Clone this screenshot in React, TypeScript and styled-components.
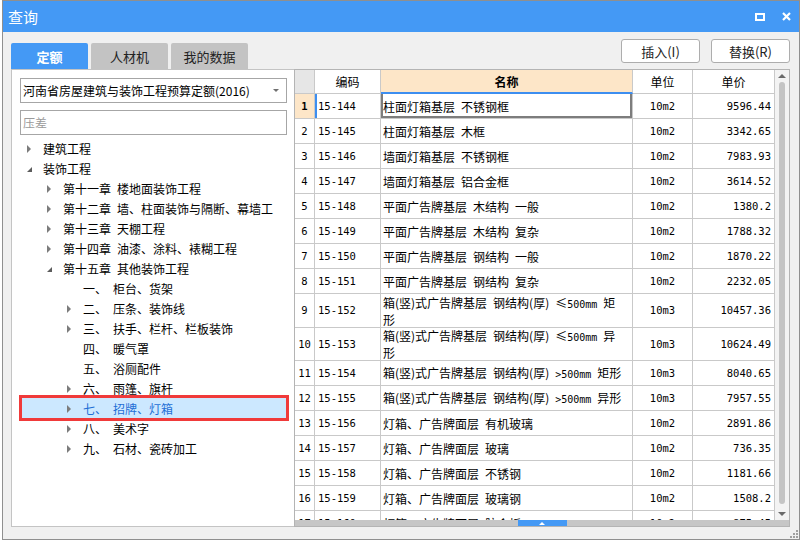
import styled, { createGlobalStyle } from "styled-components";

const GlobalStyle = createGlobalStyle`
  html, body {
    margin: 0;
    padding: 0;
    background: #ffffff;
  }
  body {
    font-family: "Noto Sans CJK SC", "Noto Sans", sans-serif;
    font-size: 12px;
    color: #000;
  }
  * {
    box-sizing: border-box;
  }
`;

const BLUE = "#4499f5";
const COLS = "20px 66px 252px 60px 82px";

type TreeItem = {
  level: number;
  label: string;
  arrow: "open" | "closed" | "none";
  selected?: boolean;
};

const tree: TreeItem[] = [
  { level: 0, label: "建筑工程", arrow: "closed" },
  { level: 0, label: "装饰工程", arrow: "open" },
  { level: 1, label: "第十一章 楼地面装饰工程", arrow: "closed" },
  { level: 1, label: "第十二章 墙、柱面装饰与隔断、幕墙工", arrow: "closed" },
  { level: 1, label: "第十三章 天棚工程", arrow: "closed" },
  { level: 1, label: "第十四章 油漆、涂料、裱糊工程", arrow: "closed" },
  { level: 1, label: "第十五章 其他装饰工程", arrow: "open" },
  { level: 2, label: "一、 柜台、货架", arrow: "none" },
  { level: 2, label: "二、 压条、装饰线", arrow: "closed" },
  { level: 2, label: "三、 扶手、栏杆、栏板装饰", arrow: "closed" },
  { level: 2, label: "四、 暖气罩", arrow: "none" },
  { level: 2, label: "五、 浴厕配件", arrow: "none" },
  { level: 2, label: "六、 雨篷、旗杆", arrow: "closed" },
  { level: 2, label: "七、 招牌、灯箱", arrow: "closed", selected: true },
  { level: 2, label: "八、 美术字", arrow: "closed" },
  { level: 2, label: "九、 石材、瓷砖加工", arrow: "closed" },
];

type Quota = { code: string; name: string; unit: string; price: string; h?: number };

const rows: Quota[] = [
  { code: "15-144", name: "柱面灯箱基层 不锈钢框", unit: "10m2", price: "9596.44" },
  { code: "15-145", name: "柱面灯箱基层 木框", unit: "10m2", price: "3342.65" },
  { code: "15-146", name: "墙面灯箱基层 不锈钢框", unit: "10m2", price: "7983.93" },
  { code: "15-147", name: "墙面灯箱基层 铝合金框", unit: "10m2", price: "3614.52" },
  { code: "15-148", name: "平面广告牌基层 木结构 一般", unit: "10m2", price: "1380.2" },
  { code: "15-149", name: "平面广告牌基层 木结构 复杂", unit: "10m2", price: "1788.32" },
  { code: "15-150", name: "平面广告牌基层 钢结构 一般", unit: "10m2", price: "1870.22" },
  { code: "15-151", name: "平面广告牌基层 钢结构 复杂", unit: "10m2", price: "2232.05" },
  { code: "15-152", name: "箱(竖)式广告牌基层 钢结构(厚) ≤500mm 矩\n形", unit: "10m3", price: "10457.36", h: 34 },
  { code: "15-153", name: "箱(竖)式广告牌基层 钢结构(厚) ≤500mm 异\n形", unit: "10m3", price: "10624.49", h: 33 },
  { code: "15-154", name: "箱(竖)式广告牌基层 钢结构(厚) >500mm 矩形", unit: "10m3", price: "8040.65" },
  { code: "15-155", name: "箱(竖)式广告牌基层 钢结构(厚) >500mm 异形", unit: "10m3", price: "7957.55" },
  { code: "15-156", name: "灯箱、广告牌面层 有机玻璃", unit: "10m2", price: "2891.86" },
  { code: "15-157", name: "灯箱、广告牌面层 玻璃", unit: "10m2", price: "736.35" },
  { code: "15-158", name: "灯箱、广告牌面层 不锈钢", unit: "10m2", price: "1181.66" },
  { code: "15-159", name: "灯箱、广告牌面层 玻璃钢", unit: "10m2", price: "1508.2" },
  { code: "15-160", name: "灯箱、广告牌面层 胶合板", unit: "10m2", price: "875.45" },
];

// half-width gaps like the old SimSun layout
const gap = (s: string) => s.replace(/ /g, "\u2002");

const Window = styled.div`
  margin-left: 2px;
  width: 798px;
  height: 540px;
  border: 1px solid #8f8f8f;
  background: #f0f0f0;
  display: flex;
  flex-direction: column;
`;

const TitleBar = styled.div`
  height: 31px;
  background: ${BLUE};
  color: #fff;
  display: flex;
  align-items: center;
  padding: 0 8px 0 5px;
  font-size: 15px;
`;

const Title = styled.span`
  flex: 1;
`;

const WinButtons = styled.div`
  display: flex;
  align-items: center;
  gap: 17px;
`;

const Toolbar = styled.div`
  height: 37px;
  display: flex;
  justify-content: space-between;
  padding: 0 9px 0 8px;
`;

const Tabs = styled.div`
  align-self: flex-end;
  display: flex;
  gap: 3px;
`;

const Tab = styled.div<{ $active?: boolean }>`
  width: 77px;
  height: 26px;
  display: flex;
  align-items: center;
  justify-content: center;
  font-size: 13px;
  font-weight: ${(p) => (p.$active ? 700 : 400)};
  color: ${(p) => (p.$active ? "#fff" : "#222")};
  background: ${(p) => (p.$active ? BLUE : "#c3c3c3")};
  border-radius: 2px 2px 0 0;
`;

const Actions = styled.div`
  display: flex;
  gap: 11px;
  margin-top: 7px;
`;

const Button = styled.button`
  width: 79px;
  height: 24px;
  background: #fff;
  border: 1px solid #adadad;
  border-radius: 3px;
  font-family: inherit;
  font-size: 13px;
  color: #222;
  padding: 0;
`;

const Content = styled.div`
  height: 458px;
  display: flex;
  padding: 0 9px 0 8px;
`;

const LeftPanel = styled.div`
  width: 283px;
  background: #fff;
  border: 1px solid #c4c4c4;
  border-right: none;
  padding: 8px 7px 0 8px;
`;

const Select = styled.div`
  height: 25px;
  border: 1px solid #a6a6a6;
  display: flex;
  align-items: center;
  justify-content: space-between;
  padding: 0 7px 0 2px;
  font-size: 12px;
`;

const Caret = styled.span`
  width: 0;
  height: 0;
  border-left: 3px solid transparent;
  border-right: 3px solid transparent;
  border-top: 3px solid #707070;
`;

const Search = styled.input`
  margin-top: 7px;
  width: 100%;
  height: 25px;
  border: 1px solid #a6a6a6;
  padding: 0 2px;
  font-family: inherit;
  font-size: 12px;
  outline: none;
  &::placeholder {
    color: #9a9a9a;
  }
`;

const Tree = styled.div`
  margin: 3px 1px 0 2px;
`;

const TreeRow = styled.div<{ $level: number; $selected?: boolean }>`
  height: 20px;
  display: flex;
  align-items: center;
  padding-left: ${(p) => 5 + p.$level * 20}px;
  white-space: pre;
  color: ${(p) => (p.$selected ? "#1f6fd6" : "#000")};
  background: ${(p) => (p.$selected ? "#cce8ff" : "transparent")};
  outline: ${(p) => (p.$selected ? "3px solid #f03a3a" : "none")};
`;

const ArrowBox = styled.span`
  width: 16px;
  height: 20px;
  flex: none;
  display: flex;
  align-items: center;
`;

const Closed = styled.span`
  width: 0;
  height: 0;
  border-left: 4px solid #7c7c7c;
  border-top: 4px solid transparent;
  border-bottom: 4px solid transparent;
  margin-top: 1px;
`;

const Opened = styled.span`
  width: 0;
  height: 0;
  border-left: 5px solid transparent;
  border-bottom: 5px solid #5c5c5c;
  margin-top: 3px;
`;

const Grid = styled.div`
  flex: 1;
  background: #fff;
  border: 1px solid #b4b4b4;
  display: flex;
  flex-direction: column;
`;

const GridMain = styled.div`
  flex: 1;
  min-height: 0;
  display: flex;
`;

const Table = styled.div`
  flex: 1;
  overflow: hidden;
`;

const Row = styled.div<{ $h: number }>`
  display: grid;
  grid-template-columns: ${COLS};
  height: ${(p) => p.$h}px;
`;

const Cell = styled.div`
  display: flex;
  align-items: center;
  border-right: 1px solid #c9c9c9;
  border-bottom: 1px solid #c9c9c9;
  overflow: hidden;
  white-space: pre;
  line-height: 15px;
`;

const HeadCell = styled(Cell)<{ $bg?: string; $bold?: boolean; $mark?: boolean }>`
  justify-content: center;
  font-size: 12px;
  font-weight: ${(p) => (p.$bold ? 700 : 400)};
  background: ${(p) => p.$bg ?? "#fff"};
  border-bottom: ${(p) => (p.$mark ? `2px solid #3d8ef0` : "1px solid #c9c9c9")};
`;

const Mono = styled(Cell)`
  font-family: "DejaVu Sans Mono", "Liberation Mono", monospace;
  font-size: 10.5px;
`;

const NumCell = styled(Mono)<{ $current?: boolean }>`
  justify-content: center;
  font-weight: ${(p) => (p.$current ? 700 : 400)};
  background: ${(p) => (p.$current ? "#fde6c8" : "#fff")};
`;

const CodeCell = styled(Mono)<{ $current?: boolean }>`
  padding-left: 3px;
  box-shadow: ${(p) => (p.$current ? "inset 2px 0 0 #3d8ef0" : "none")};
`;

const NameCell = styled(Cell)<{ $current?: boolean }>`
  padding-left: 2px;
  font-size: 12px;
  box-shadow: ${(p) =>
    p.$current ? "inset 2px 0 0 #7d7d7d, inset -2px 0 0 #7d7d7d, inset 0 -2px 0 #7d7d7d" : "none"};
`;

const NameText = styled.span`
  white-space: pre;
`;

const Latin = styled.span`
  font-family: "DejaVu Sans Mono", "Liberation Mono", monospace;
  font-size: 10px;
`;

const UnitCell = styled(Mono)`
  justify-content: center;
`;

const PriceCell = styled(Mono)`
  justify-content: flex-end;
  padding-right: 3px;
`;

const VScroll = styled.div`
  width: 14px;
  background: #f3f3f3;
  display: flex;
  flex-direction: column;
  align-items: center;
  padding: 4px 0 4px;
`;

const ScrollArrow = styled.span<{ $down?: boolean }>`
  width: 0;
  height: 0;
  border-left: 4px solid transparent;
  border-right: 4px solid transparent;
  ${(p) => (p.$down ? "border-top: 4px solid #6a6a6a;" : "border-bottom: 4px solid #6a6a6a;")}
`;

const Thumb = styled.div`
  flex: 1;
  width: 6px;
  margin: 4px 0 8px;
  border-radius: 3px;
  background: #c4c4c4;
`;

const HScroll = styled.div`
  height: 6px;
  background: #c6c6c6;
  display: flex;
  justify-content: center;
`;

const HThumb = styled.div`
  width: 49px;
  background: ${BLUE};
  display: flex;
  justify-content: center;
  align-items: center;
`;

const HThumbArrow = styled.span`
  width: 0;
  height: 0;
  border-left: 3px solid transparent;
  border-right: 3px solid transparent;
  border-bottom: 3px solid #fff;
`;

const Footer = styled.div`
  flex: 1;
  display: flex;
  justify-content: flex-end;
  align-items: flex-end;
  padding: 0 1px 1px 0;
`;

function TreeArrow({ kind }: { kind: TreeItem["arrow"] }) {
  return <ArrowBox>{kind === "closed" ? <Closed /> : kind === "open" ? <Opened /> : null}</ArrowBox>;
}

// latin runs are half-width, as in the original font
function QuotaName({ text }: { text: string }) {
  const parts = gap(text).split(/([A-Za-z0-9>]+)/);
  return (
    <NameText>
      {parts.map((p, i) => (i % 2 === 1 ? <Latin key={i}>{p}</Latin> : p))}
    </NameText>
  );
}

function Grip() {
  const dots = [
    [7, 1],
    [4, 4],
    [7, 4],
    [1, 7],
    [4, 7],
    [7, 7],
  ];
  return (
    <svg width="9" height="9" viewBox="0 0 9 9">
      {dots.map(([x, y]) => (
        <rect key={`${x}-${y}`} x={x} y={y} width="2" height="2" fill="#a0a0a0" />
      ))}
    </svg>
  );
}

export default function App() {
  return (
    <>
      <GlobalStyle />
      <Window>
        <TitleBar>
          <Title>查询</Title>
          <WinButtons>
            <svg width="10" height="8" viewBox="0 0 10 8">
              <rect x="1" y="1" width="8" height="6" fill="none" stroke="#fff" strokeWidth="2" />
            </svg>
            <svg width="9" height="9" viewBox="0 0 9 9">
              <path d="M1 1 L8 8 M8 1 L1 8" stroke="#fff" strokeWidth="2.2" />
            </svg>
          </WinButtons>
        </TitleBar>

        <Toolbar>
          <Tabs>
            <Tab $active>定额</Tab>
            <Tab>人材机</Tab>
            <Tab>我的数据</Tab>
          </Tabs>
          <Actions>
            <Button>插入(I)</Button>
            <Button>替换(R)</Button>
          </Actions>
        </Toolbar>

        <Content>
          <LeftPanel>
            <Select>
              <span>河南省房屋建筑与装饰工程预算定额(2016)</span>
              <Caret />
            </Select>
            <Search placeholder="压差" />
            <Tree>
              {tree.map((t) => (
                <TreeRow key={t.label} $level={t.level} $selected={t.selected}>
                  <TreeArrow kind={t.arrow} />
                  {gap(t.label)}
                </TreeRow>
              ))}
            </Tree>
          </LeftPanel>

          <Grid>
            <GridMain>
              <Table>
                <Row $h={24}>
                  <HeadCell $bg="#e6e6e6" />
                  <HeadCell>编码</HeadCell>
                  <HeadCell $bg="#fde6c8" $bold $mark>
                    名称
                  </HeadCell>
                  <HeadCell>单位</HeadCell>
                  <HeadCell>单价</HeadCell>
                </Row>
                {rows.map((r, i) => {
                  const current = i === 0;
                  return (
                    <Row key={r.code} $h={r.h ?? 25}>
                      <NumCell $current={current}>{i + 1}</NumCell>
                      <CodeCell $current={current}>{r.code}</CodeCell>
                      <NameCell $current={current}>
                        <QuotaName text={r.name} />
                      </NameCell>
                      <UnitCell>{r.unit}</UnitCell>
                      <PriceCell>{r.price}</PriceCell>
                    </Row>
                  );
                })}
              </Table>
              <VScroll>
                <ScrollArrow />
                <Thumb />
                <ScrollArrow $down />
              </VScroll>
            </GridMain>
            <HScroll>
              <HThumb>
                <HThumbArrow />
              </HThumb>
            </HScroll>
          </Grid>
        </Content>

        <Footer>
          <Grip />
        </Footer>
      </Window>
    </>
  );
}
